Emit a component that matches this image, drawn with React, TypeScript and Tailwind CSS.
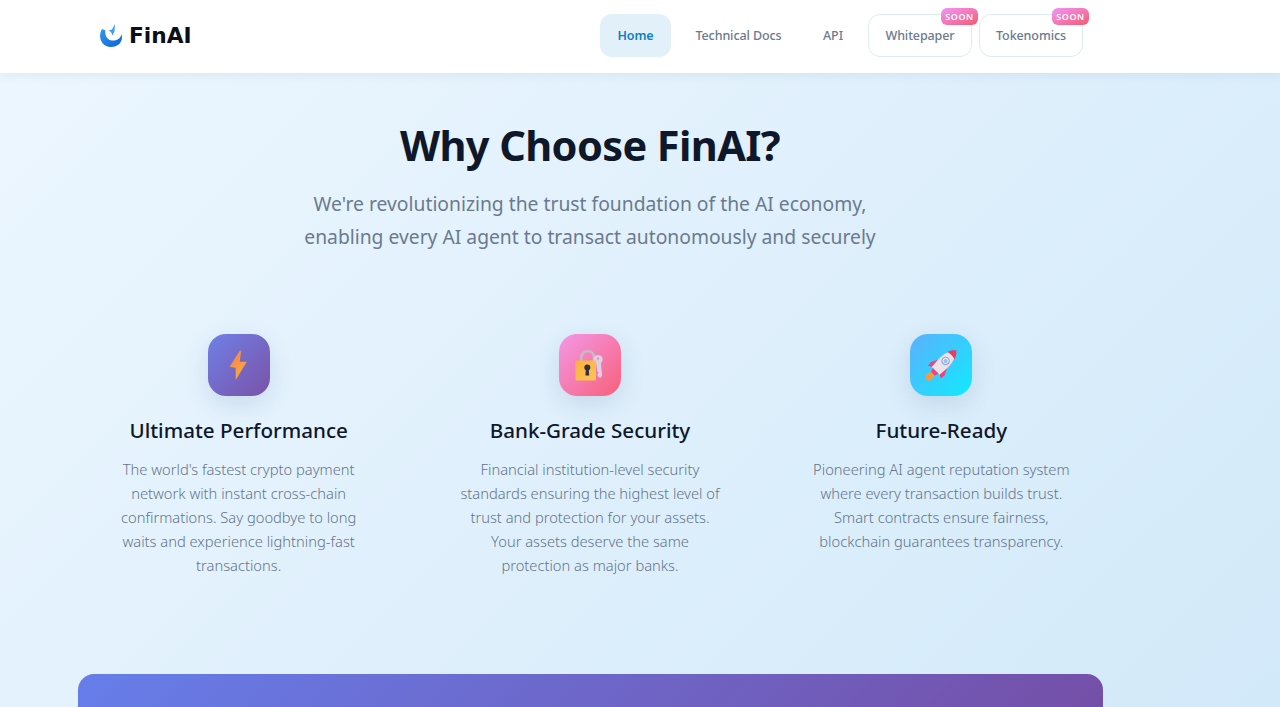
import React from "react";

function Logo() {
  return (
    <svg width="26" height="26" viewBox="0 0 26 26" className="shrink-0">
      <defs>
        <linearGradient id="lg" x1="0" y1="0" x2="1" y2="1">
          <stop offset="0" stopColor="#2f9bf0" />
          <stop offset="1" stopColor="#0a5fd8" />
        </linearGradient>
      </defs>
      <path d="M4 6 C-0.5 13 3 24 13 24 C21 24 25.5 18 23.5 11 C23 15 19 18 14 17.5 C9 17 6.5 12 7.5 7.5 Z" fill="url(#lg)" />
      <path d="M17 1 L16.5 8.5 L14.5 12.5 L13 9 L10.5 7.5 L14 6.5 Z" fill="#3f9ff0" />
    </svg>
  );
}

function Bolt() {
  return (
    <svg width="19" height="31" viewBox="0 0 19 31">
      <defs>
        <linearGradient id="bolt" x1="0.2" y1="0" x2="0.8" y2="1">
          <stop offset="0" stopColor="#f6824a" />
          <stop offset="1" stopColor="#fbb040" />
        </linearGradient>
      </defs>
      <path d="M10.7 0.7 L0.7 16.7 L6.7 17.7 L6.7 30 L17.8 11.7 L10.7 11.7 L12.3 0.7 Z" fill="url(#bolt)" />
    </svg>
  );
}

function Lock() {
  return (
    <svg width="30" height="31" viewBox="0 0 30 31">
      <defs>
        <linearGradient id="lockb" x1="0" y1="0" x2="1" y2="1">
          <stop offset="0" stopColor="#fbb03b" />
          <stop offset="1" stopColor="#fdc65a" />
        </linearGradient>
      </defs>
      <path d="M6.3 12 V8 C6.3 3.5 9 1.3 12.7 1.3 C16.4 1.3 19 3.5 19 8 V12" fill="none" stroke="#c9b8c6" strokeWidth="2.6" />
      <g transform="rotate(-6 24 18)">
        <circle cx="24" cy="9.5" r="4.6" fill="#dccfe6" />
        <path d="M21.8 12 H26.4 V25.5 L24.4 28 L21.8 26 V23.5 L23.4 22.5 L21.8 21.3 V20 Z" fill="#dccfe6" />
        <circle cx="24" cy="8.6" r="1.2" fill="#f58ab5" />
      </g>
      <rect x="0.5" y="10.5" width="20.5" height="20" rx="1" fill="url(#lockb)" />
      <circle cx="12.3" cy="17.5" r="3" fill="#33303f" />
      <path d="M10.9 18.5 L13.7 18.5 L14.2 25.5 L10.4 25.5 Z" fill="#33303f" />
    </svg>
  );
}

function Rocket() {
  return (
    <svg width="32" height="31" viewBox="0 0 32 31">
      <ellipse cx="4.5" cy="26.5" rx="4.4" ry="3.6" transform="rotate(-45 4.5 26.5)" fill="#f79a3e" />
      <g transform="rotate(45 16 15.5)">
        <path d="M16 -4 C21.5 1 22.5 8 22 13 L25.5 20 L25 25 L21 22.5 L11 22.5 L7 25 L6.5 20 L10 13 C9.5 8 10.5 1 16 -4 Z" fill="#f0417f" />
        <path d="M16 -4 C22.5 1 23 8 21.5 23 L10.5 23 C9 8 9.5 1 16 -4 Z" fill="#e9e3ea" />
        <path d="M16 -6 C18.5 -4 20.5 -1.5 21 1.5 C18 0.5 14 0.5 11 1.5 C11.5 -1.5 13.5 -4 16 -6 Z" fill="#ee3a63" />
        <path d="M12 23 H20 L18.5 27 H13.5 Z" fill="#f0417f" />
        <circle cx="16" cy="9" r="3.6" fill="#f6f2f6" stroke="#9f9fe0" strokeWidth="1.3" />
        <circle cx="16" cy="9" r="2.1" fill="#8cc6f3" />
      </g>
    </svg>
  );
}

function Badge() {
  return (
    <span className="absolute right-[-7px] top-[-7px] h-[17px] w-[37px] rounded-[6px] bg-gradient-to-br from-[#f093fb] to-[#f5576c] text-center text-[9px] leading-[17px] font-semibold tracking-[0.5px] text-white">
      SOON
    </span>
  );
}

const features = [
  {
    title: "Ultimate Performance",
    grad: "bg-[linear-gradient(135deg,#6f80e6,#7a52a8)]",
    icon: <Bolt />,
    lines: [
      "The world's fastest crypto payment",
      "network with instant cross-chain",
      "confirmations. Say goodbye to long",
      "waits and experience lightning-fast",
      "transactions.",
    ],
  },
  {
    title: "Bank-Grade Security",
    grad: "bg-[linear-gradient(135deg,#f498e8,#f7607a)]",
    icon: <Lock />,
    lines: [
      "Financial institution-level security",
      "standards ensuring the highest level of",
      "trust and protection for your assets.",
      "Your assets deserve the same",
      "protection as major banks.",
    ],
  },
  {
    title: "Future-Ready",
    grad: "bg-[linear-gradient(135deg,#5cb0fd,#10eafe)]",
    icon: <Rocket />,
    lines: [
      "Pioneering AI agent reputation system",
      "where every transaction builds trust.",
      "Smart contracts ensure fairness,",
      "blockchain guarantees transparency.",
    ],
  },
];

export default function App() {
  return (
    <div className="flex h-[707px] flex-col overflow-hidden bg-[linear-gradient(135deg,#edf7ff,#d2e9f9)] font-['Noto_Sans','Open_Sans',sans-serif]">
      <header className="relative z-10 h-[73px] shrink-0 bg-white shadow-[0_2px_10px_rgba(30,80,130,0.08)]">
        <div className="ml-[78px] flex h-[71px] w-[1024px] items-center justify-between pl-[20px] pr-[19px]">
          <div className="flex items-center gap-[5px]">
            <Logo />
            <span className="font-['DejaVu_Sans',sans-serif] text-[21.7px] leading-none font-bold text-[#0b0f1a]">FinAI</span>
          </div>
          <nav className="flex items-center text-[12.5px] font-medium tracking-[-0.1px] text-[#6b7a8e]">
            <a className="flex h-[43px] w-[71px] items-center justify-center rounded-[12px] bg-[#e2f0f9] pt-[1px] font-semibold text-[#0f7fc0]">Home</a>
            <a className="flex h-[43px] w-[135px] items-center justify-center rounded-[12px] pt-[1px]">Technical Docs</a>
            <a className="mr-[8px] flex h-[43px] w-[54px] items-center justify-center rounded-[12px] pt-[1px]">API</a>
            <a className="relative mr-[7px] flex h-[43px] w-[104px] items-center justify-center rounded-[12px] border border-[#dcecf6] pt-[1px]">
              Whitepaper
              <Badge />
            </a>
            <a className="relative flex h-[43px] w-[104px] items-center justify-center rounded-[12px] border border-[#dcecf6] pt-[1px]">
              Tokenomics
              <Badge />
            </a>
          </nav>
        </div>
      </header>

      <main className="ml-[78px] w-[1024px]">
        <h1 className="mt-[44px] text-center text-[41.5px] leading-[56px] font-bold tracking-[-0.6px] text-[#0f172a]">Why Choose FinAI?</h1>
        <p className="mt-[14px] text-center text-[19.3px] leading-[33px] text-[#6b7a8e]">
          We're revolutionizing the trust foundation of the AI economy,
          <br />
          enabling every AI agent to transact autonomously and securely
        </p>

        <div className="mt-[81px] grid grid-cols-3 gap-[30px]">
          {features.map((f) => (
            <div key={f.title} className="flex flex-col items-center text-center">
              <div className={`flex h-[62px] w-[62px] items-center justify-center rounded-[18px] shadow-[0_8px_24px_rgba(40,80,130,0.14)] ${f.grad}`}>
                {f.icon}
              </div>
              <h3 className="mt-[18px] text-[20.6px] leading-[32px] font-medium text-[#0f172a]">{f.title}</h3>
              <p className="mt-[11px] text-[14.7px] leading-[24.1px] font-light text-[#64748b]">
                {f.lines.map((l) => (
                  <span key={l} className="block">{l}</span>
                ))}
              </p>
            </div>
          ))}
        </div>

        <div className="mt-[97px] h-[120px] w-[1025px] rounded-[16px] bg-[linear-gradient(135deg,#667eea,#764ba2)]" />
      </main>
    </div>
  );
}
